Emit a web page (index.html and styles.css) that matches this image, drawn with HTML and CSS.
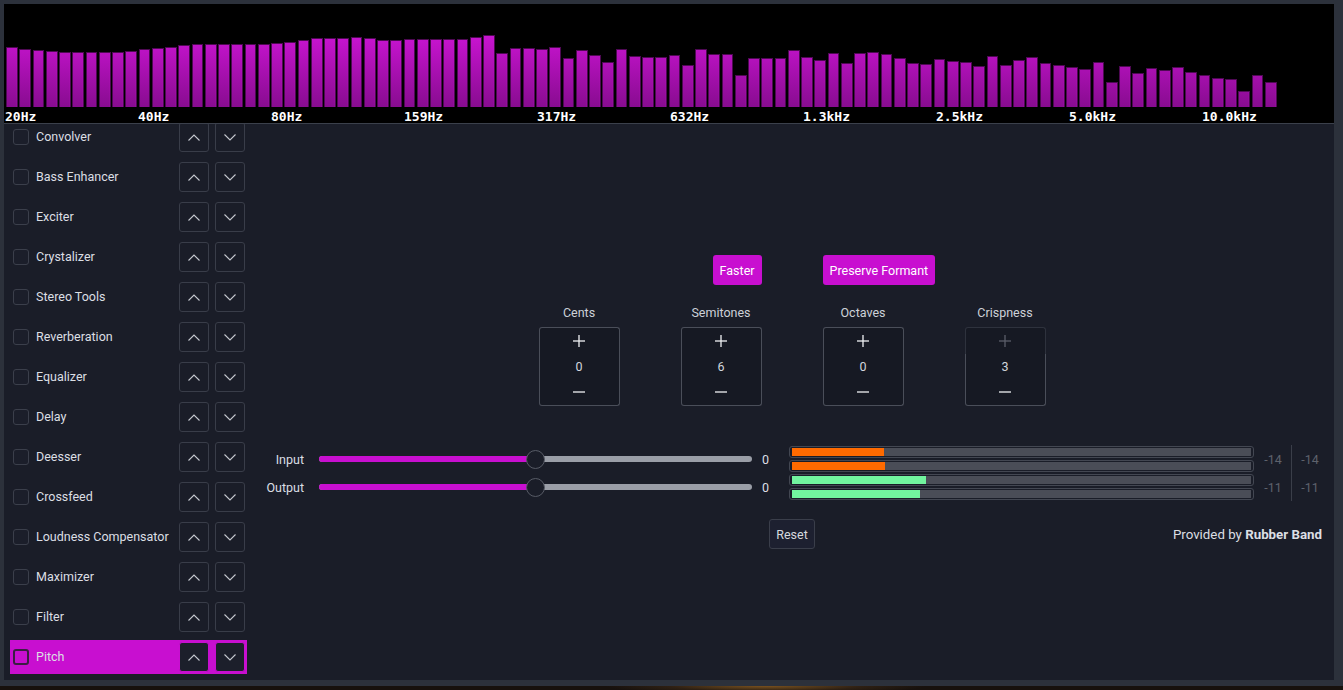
FILE: index.html
```html
<!DOCTYPE html>
<html>
<head>
<meta charset="utf-8">
<link rel="stylesheet" href="styles.css">
</head>
<body>
<div class="window">
  <div class="spectrum">
    <div class="bars">
      <div class="bar" style="height:60px"></div><div class="bar" style="height:58px"></div><div class="bar" style="height:57px"></div><div class="bar" style="height:56px"></div><div class="bar" style="height:55px"></div><div class="bar" style="height:55px"></div><div class="bar" style="height:55px"></div><div class="bar" style="height:55px"></div><div class="bar" style="height:55px"></div><div class="bar" style="height:56px"></div>
      <div class="bar" style="height:58px"></div><div class="bar" style="height:59px"></div><div class="bar" style="height:60px"></div><div class="bar" style="height:62px"></div><div class="bar" style="height:63px"></div><div class="bar" style="height:63px"></div><div class="bar" style="height:63px"></div><div class="bar" style="height:63px"></div><div class="bar" style="height:63px"></div><div class="bar" style="height:63px"></div>
      <div class="bar" style="height:64px"></div><div class="bar" style="height:65px"></div><div class="bar" style="height:67px"></div><div class="bar" style="height:69px"></div><div class="bar" style="height:69px"></div><div class="bar" style="height:69px"></div><div class="bar" style="height:70px"></div><div class="bar" style="height:69px"></div><div class="bar" style="height:67px"></div><div class="bar" style="height:67px"></div>
      <div class="bar" style="height:68px"></div><div class="bar" style="height:68px"></div><div class="bar" style="height:68px"></div><div class="bar" style="height:68px"></div><div class="bar" style="height:68px"></div><div class="bar" style="height:70px"></div><div class="bar" style="height:72px"></div><div class="bar" style="height:54px"></div><div class="bar" style="height:59px"></div><div class="bar" style="height:59px"></div>
      <div class="bar" style="height:58px"></div><div class="bar" style="height:60px"></div><div class="bar" style="height:49px"></div><div class="bar" style="height:57px"></div><div class="bar" style="height:52px"></div><div class="bar" style="height:45px"></div><div class="bar" style="height:58px"></div><div class="bar" style="height:51px"></div><div class="bar" style="height:50px"></div><div class="bar" style="height:50px"></div>
      <div class="bar" style="height:52px"></div><div class="bar" style="height:42px"></div><div class="bar" style="height:58px"></div><div class="bar" style="height:53px"></div><div class="bar" style="height:53px"></div><div class="bar" style="height:32px"></div><div class="bar" style="height:49px"></div><div class="bar" style="height:49px"></div><div class="bar" style="height:49px"></div><div class="bar" style="height:57px"></div>
      <div class="bar" style="height:50px"></div><div class="bar" style="height:47px"></div><div class="bar" style="height:54px"></div><div class="bar" style="height:44px"></div><div class="bar" style="height:54px"></div><div class="bar" style="height:55px"></div><div class="bar" style="height:53px"></div><div class="bar" style="height:49px"></div><div class="bar" style="height:44px"></div><div class="bar" style="height:43px"></div>
      <div class="bar" style="height:48px"></div><div class="bar" style="height:46px"></div><div class="bar" style="height:45px"></div><div class="bar" style="height:41px"></div><div class="bar" style="height:51px"></div><div class="bar" style="height:42px"></div><div class="bar" style="height:47px"></div><div class="bar" style="height:50px"></div><div class="bar" style="height:44px"></div><div class="bar" style="height:42px"></div>
      <div class="bar" style="height:40px"></div><div class="bar" style="height:38px"></div><div class="bar" style="height:45px"></div><div class="bar" style="height:25px"></div><div class="bar" style="height:41px"></div><div class="bar" style="height:34px"></div><div class="bar" style="height:39px"></div><div class="bar" style="height:37px"></div><div class="bar" style="height:40px"></div><div class="bar" style="height:35px"></div>
      <div class="bar" style="height:32px"></div><div class="bar" style="height:29px"></div><div class="bar" style="height:28px"></div><div class="bar" style="height:16px"></div><div class="bar" style="height:32px"></div><div class="bar" style="height:25px"></div>
    </div>
    <div class="freqs">
      <span>20Hz</span><span>40Hz</span><span>80Hz</span><span>159Hz</span><span>317Hz</span><span>632Hz</span><span>1.3kHz</span><span>2.5kHz</span><span>5.0kHz</span><span>10.0kHz</span>
    </div>
  </div>

  <div class="content">
    <aside class="plugins">
      <div class="plugin-list">
        <div class="row"><span class="check"></span><span class="name">Convolver</span><button class="mv"><svg viewBox="0 0 12 7" class="chev"><polyline points="0.5,6.5 6,1 11.5,6.5"/></svg></button><button class="mv"><svg viewBox="0 0 12 7" class="chev"><polyline points="0.5,0.5 6,6 11.5,0.5"/></svg></button></div>
        <div class="row"><span class="check"></span><span class="name">Bass Enhancer</span><button class="mv"><svg viewBox="0 0 12 7" class="chev"><polyline points="0.5,6.5 6,1 11.5,6.5"/></svg></button><button class="mv"><svg viewBox="0 0 12 7" class="chev"><polyline points="0.5,0.5 6,6 11.5,0.5"/></svg></button></div>
        <div class="row"><span class="check"></span><span class="name">Exciter</span><button class="mv"><svg viewBox="0 0 12 7" class="chev"><polyline points="0.5,6.5 6,1 11.5,6.5"/></svg></button><button class="mv"><svg viewBox="0 0 12 7" class="chev"><polyline points="0.5,0.5 6,6 11.5,0.5"/></svg></button></div>
        <div class="row"><span class="check"></span><span class="name">Crystalizer</span><button class="mv"><svg viewBox="0 0 12 7" class="chev"><polyline points="0.5,6.5 6,1 11.5,6.5"/></svg></button><button class="mv"><svg viewBox="0 0 12 7" class="chev"><polyline points="0.5,0.5 6,6 11.5,0.5"/></svg></button></div>
        <div class="row"><span class="check"></span><span class="name">Stereo Tools</span><button class="mv"><svg viewBox="0 0 12 7" class="chev"><polyline points="0.5,6.5 6,1 11.5,6.5"/></svg></button><button class="mv"><svg viewBox="0 0 12 7" class="chev"><polyline points="0.5,0.5 6,6 11.5,0.5"/></svg></button></div>
        <div class="row"><span class="check"></span><span class="name">Reverberation</span><button class="mv"><svg viewBox="0 0 12 7" class="chev"><polyline points="0.5,6.5 6,1 11.5,6.5"/></svg></button><button class="mv"><svg viewBox="0 0 12 7" class="chev"><polyline points="0.5,0.5 6,6 11.5,0.5"/></svg></button></div>
        <div class="row"><span class="check"></span><span class="name">Equalizer</span><button class="mv"><svg viewBox="0 0 12 7" class="chev"><polyline points="0.5,6.5 6,1 11.5,6.5"/></svg></button><button class="mv"><svg viewBox="0 0 12 7" class="chev"><polyline points="0.5,0.5 6,6 11.5,0.5"/></svg></button></div>
        <div class="row"><span class="check"></span><span class="name">Delay</span><button class="mv"><svg viewBox="0 0 12 7" class="chev"><polyline points="0.5,6.5 6,1 11.5,6.5"/></svg></button><button class="mv"><svg viewBox="0 0 12 7" class="chev"><polyline points="0.5,0.5 6,6 11.5,0.5"/></svg></button></div>
        <div class="row"><span class="check"></span><span class="name">Deesser</span><button class="mv"><svg viewBox="0 0 12 7" class="chev"><polyline points="0.5,6.5 6,1 11.5,6.5"/></svg></button><button class="mv"><svg viewBox="0 0 12 7" class="chev"><polyline points="0.5,0.5 6,6 11.5,0.5"/></svg></button></div>
        <div class="row"><span class="check"></span><span class="name">Crossfeed</span><button class="mv"><svg viewBox="0 0 12 7" class="chev"><polyline points="0.5,6.5 6,1 11.5,6.5"/></svg></button><button class="mv"><svg viewBox="0 0 12 7" class="chev"><polyline points="0.5,0.5 6,6 11.5,0.5"/></svg></button></div>
        <div class="row"><span class="check"></span><span class="name">Loudness Compensator</span><button class="mv"><svg viewBox="0 0 12 7" class="chev"><polyline points="0.5,6.5 6,1 11.5,6.5"/></svg></button><button class="mv"><svg viewBox="0 0 12 7" class="chev"><polyline points="0.5,0.5 6,6 11.5,0.5"/></svg></button></div>
        <div class="row"><span class="check"></span><span class="name">Maximizer</span><button class="mv"><svg viewBox="0 0 12 7" class="chev"><polyline points="0.5,6.5 6,1 11.5,6.5"/></svg></button><button class="mv"><svg viewBox="0 0 12 7" class="chev"><polyline points="0.5,0.5 6,6 11.5,0.5"/></svg></button></div>
        <div class="row"><span class="check"></span><span class="name">Filter</span><button class="mv"><svg viewBox="0 0 12 7" class="chev"><polyline points="0.5,6.5 6,1 11.5,6.5"/></svg></button><button class="mv"><svg viewBox="0 0 12 7" class="chev"><polyline points="0.5,0.5 6,6 11.5,0.5"/></svg></button></div>
        <div class="row selected"><span class="check"></span><span class="name">Pitch</span><button class="mv"><svg viewBox="0 0 12 7" class="chev"><polyline points="0.5,6.5 6,1 11.5,6.5"/></svg></button><button class="mv"><svg viewBox="0 0 12 7" class="chev"><polyline points="0.5,0.5 6,6 11.5,0.5"/></svg></button></div>
      </div>
    </aside>

    <main class="main">
      <div class="toggles">
        <button class="toggle faster">Faster</button>
        <button class="toggle formant">Preserve Formant</button>
      </div>

      <div class="spins">
        <div class="spin">
          <div class="spin-label">Cents</div>
          <div class="spin-box">
            <div class="sb-plus"><svg viewBox="0 0 12 12" class="pm"><line x1="0" y1="6" x2="12" y2="6"/><line x1="6" y1="0" x2="6" y2="12"/></svg></div>
            <div class="sb-value">0</div>
            <div class="sb-minus"><svg viewBox="0 0 12 12" class="pm"><line x1="0" y1="6" x2="12" y2="6"/></svg></div>
          </div>
        </div>
        <div class="spin">
          <div class="spin-label">Semitones</div>
          <div class="spin-box">
            <div class="sb-plus"><svg viewBox="0 0 12 12" class="pm"><line x1="0" y1="6" x2="12" y2="6"/><line x1="6" y1="0" x2="6" y2="12"/></svg></div>
            <div class="sb-value">6</div>
            <div class="sb-minus"><svg viewBox="0 0 12 12" class="pm"><line x1="0" y1="6" x2="12" y2="6"/></svg></div>
          </div>
        </div>
        <div class="spin">
          <div class="spin-label">Octaves</div>
          <div class="spin-box">
            <div class="sb-plus"><svg viewBox="0 0 12 12" class="pm"><line x1="0" y1="6" x2="12" y2="6"/><line x1="6" y1="0" x2="6" y2="12"/></svg></div>
            <div class="sb-value">0</div>
            <div class="sb-minus"><svg viewBox="0 0 12 12" class="pm"><line x1="0" y1="6" x2="12" y2="6"/></svg></div>
          </div>
        </div>
        <div class="spin">
          <div class="spin-label">Crispness</div>
          <div class="spin-box">
            <div class="sb-plus disabled"><svg viewBox="0 0 12 12" class="pm"><line x1="0" y1="6" x2="12" y2="6"/><line x1="6" y1="0" x2="6" y2="12"/></svg></div>
            <div class="sb-value">3</div>
            <div class="sb-minus"><svg viewBox="0 0 12 12" class="pm"><line x1="0" y1="6" x2="12" y2="6"/></svg></div>
          </div>
        </div>
      </div>

      <div class="levels">
        <div class="sliders">
          <div class="slider-row">
            <span class="slider-label">Input</span>
            <div class="track"><div class="track-fill" style="width:50%"></div><div class="knob" style="left:50%"></div></div>
            <span class="slider-value">0</span>
          </div>
          <div class="slider-row">
            <span class="slider-label">Output</span>
            <div class="track"><div class="track-fill" style="width:50%"></div><div class="knob" style="left:50%"></div></div>
            <span class="slider-value">0</span>
          </div>
        </div>
        <div class="meters-wrap">
          <div class="meters">
            <div class="meter"><div class="meter-track"><div class="meter-fill orange" style="width:20%"></div></div></div>
            <div class="meter"><div class="meter-track"><div class="meter-fill orange" style="width:20.3%"></div></div></div>
            <div class="meter"><div class="meter-track"><div class="meter-fill green" style="width:29.1%"></div></div></div>
            <div class="meter"><div class="meter-track"><div class="meter-fill green" style="width:27.8%"></div></div></div>
          </div>
          <div class="db"><span>-14</span><span>-11</span></div>
          <div class="db-sep"></div>
          <div class="db"><span>-14</span><span>-11</span></div>
        </div>
      </div>

      <div class="footer">
        <button class="reset">Reset</button>
        <div class="credit">Provided by <b>Rubber Band</b></div>
      </div>
    </main>
  </div>
</div>
<div class="wallpaper"></div>
</body>
</html>
```
FILE: styles.css
```css
* { box-sizing: border-box; }

body {
  margin: 0;
  width: 1343px;
  height: 690px;
  overflow: hidden;
  background: #15100c;
  font-family: Roboto, "Liberation Sans", sans-serif;
  font-size: 12.5px;
  color: #dcdfe4;
}

button {
  font: inherit;
  color: inherit;
  cursor: default;
}

.window {
  height: 686px;
  background: #2c313b;
  padding: 4px 9px 6px 4px;
  display: flex;
  flex-direction: column;
}

/* ---------- spectrum ---------- */
.spectrum {
  height: 120px;
  flex: 0 0 120px;
  background: #000;
  border-bottom: 1px solid #3b404b;
  display: flex;
  flex-direction: column;
}

.bars {
  height: 103px;
  width: 1273px;
  padding-left: 2px;
  display: flex;
  align-items: flex-end;
  gap: 1.5px;
}

.bar {
  flex: 1;
  background-color: #c914d1;
  background-image: linear-gradient(to bottom, #c914d1, #880c90);
  background-size: 100% 72px;
  background-position: bottom;
  background-repeat: no-repeat;
  border: 1px solid #4e0953;
  border-bottom: none;
}

.freqs {
  height: 16px;
  padding: 1.5px 0 0 1px;
  display: flex;
  font: bold 13px/16px "DejaVu Sans Mono", monospace;
  color: #fff;
}

.freqs span { flex: 0 0 133px; }

/* ---------- content ---------- */
.content {
  flex: 1;
  min-height: 0;
  display: flex;
  background: #1a1d28;
}

.plugins {
  width: 246px;
  flex: 0 0 246px;
  overflow: hidden;
}

.plugin-list {
  margin-top: -4px;
  padding: 0 3px 0 6px;
  display: flex;
  flex-direction: column;
  gap: 6px;
}

.row {
  height: 34px;
  display: flex;
  align-items: center;
  padding: 0 2px 0 3px;
}

.check {
  width: 16px;
  height: 16px;
  border: 1px solid #3b3f4b;
  border-radius: 3px;
  background: #1b1e2a;
}

.name {
  flex: 1;
  margin-left: 7px;
  padding-bottom: 1px;
  white-space: nowrap;
}

.mv {
  width: 30px;
  height: 30px;
  margin-left: 6px;
  padding: 0;
  border: 1px solid #393d49;
  border-radius: 3px;
  background: #1a1d28;
  display: flex;
  align-items: center;
  justify-content: center;
}

.chev {
  width: 12px;
  height: 7px;
  fill: none;
  stroke: #c6c9d0;
  stroke-width: 1.1;
}

.row.selected { background: #c80fd0; }
.row.selected .mv { border-color: #c80fd0; background: #1c1f2b; }
.row.selected .check {
  background: transparent;
  border: 2px solid #3a1e42;
}

/* ---------- main ---------- */
.main {
  flex: 1;
  display: flex;
  flex-direction: column;
  justify-content: center;
  padding: 0 12px;
}

.toggles, .spins {
  display: grid;
  grid-template-columns: repeat(4, 81px);
  column-gap: 61px;
  justify-content: center;
}

.toggle {
  height: 30px;
  padding: 0 7px;
  border: none;
  border-radius: 3px;
  background: #c80fd0;
  color: #fff;
}

.faster { grid-column: 2; justify-self: end; }
.formant { grid-column: 3; justify-self: start; white-space: nowrap; }

.spins { margin-top: 19px; }

.spin {
  display: flex;
  flex-direction: column;
  align-items: center;
}

.spin-label {
  height: 16px;
  line-height: 17px;
  margin-bottom: 7px;
  color: #cdd1d8;
}

.spin-box { width: 81px; }

.sb-plus, .sb-value, .sb-minus {
  display: flex;
  align-items: center;
  justify-content: center;
  background: #161923;
  border: 1px solid #4a4e59;
}

.sb-plus {
  height: 27px;
  border-bottom: none;
  border-radius: 3px 3px 0 0;
}

.sb-value {
  height: 25px;
  padding-bottom: 1px;
  border-top: none;
  border-bottom: none;
  color: #d2d6dd;
}

.sb-minus {
  height: 27px;
  border-top: none;
  border-radius: 0 0 3px 3px;
}

.pm {
  width: 12px;
  height: 12px;
  stroke: #f2f3f5;
  stroke-width: 1.3;
}

.sb-plus.disabled { border-color: #2e323d; }
.sb-plus.disabled .pm { stroke: #5b5f69; }

/* ---------- levels ---------- */
.levels {
  margin-top: 39px;
  height: 55px;
  display: grid;
  grid-template-columns: 517px 1fr;
  column-gap: 10px;
}

.sliders {
  display: flex;
  flex-direction: column;
  justify-content: center;
}

.slider-row {
  height: 28px;
  display: flex;
  align-items: center;
}

.slider-label {
  width: 42px;
  margin-right: 15px;
  text-align: right;
}

.track {
  position: relative;
  width: 433px;
  height: 6px;
  border-radius: 3px;
  background: #9a9ea7;
}

.track-fill {
  height: 100%;
  border-radius: 3px 0 0 3px;
  background: #c80fd0;
}

.knob {
  position: absolute;
  top: 50%;
  width: 19px;
  height: 19px;
  margin: -9.5px 0 0 -9.5px;
  border-radius: 50%;
  background: #1a1d28;
  border: 1px solid #575b66;
}

.slider-value { margin-left: 10px; }

.meters-wrap {
  display: flex;
  align-items: stretch;
}

.meters {
  flex: 1;
  display: flex;
  flex-direction: column;
  justify-content: center;
  gap: 2px;
}

.meter {
  height: 12px;
  border: 1px solid #434752;
  border-radius: 3px;
  padding: 1px 2px;
}

.meter-track {
  height: 8px;
  background: #4a4d57;
}

.meter-fill { height: 100%; }
.meter-fill.orange { background: #ff6a00; }
.meter-fill.green { background: #72f59f; }

.db {
  width: 24px;
  margin-left: 7px;
  display: flex;
  flex-direction: column;
  justify-content: space-around;
  align-items: center;
  color: #5e626c;
}

.db-sep {
  width: 1px;
  margin-left: 6px;
  background: #3a3e49;
}

.db-sep + .db { margin-left: 6px; }

/* ---------- footer ---------- */
.footer {
  margin-top: 19px;
  height: 30px;
  display: grid;
  grid-template-columns: 1fr auto 1fr;
  align-items: center;
}

.reset {
  grid-column: 2;
  height: 30px;
  padding: 0 6px;
  border: 1px solid #3a3e4a;
  border-radius: 3px;
  background: #1d2030;
  color: #d6d9df;
}

.credit {
  justify-self: end;
  font-size: 13.3px;
  color: #dcdfe4;
}

.wallpaper {
  height: 4px;
  background: radial-gradient(ellipse 160px 8px at 57% 0%, #7a521f 0%, #2e2013 60%, transparent 100%), #17110d;
}
```
